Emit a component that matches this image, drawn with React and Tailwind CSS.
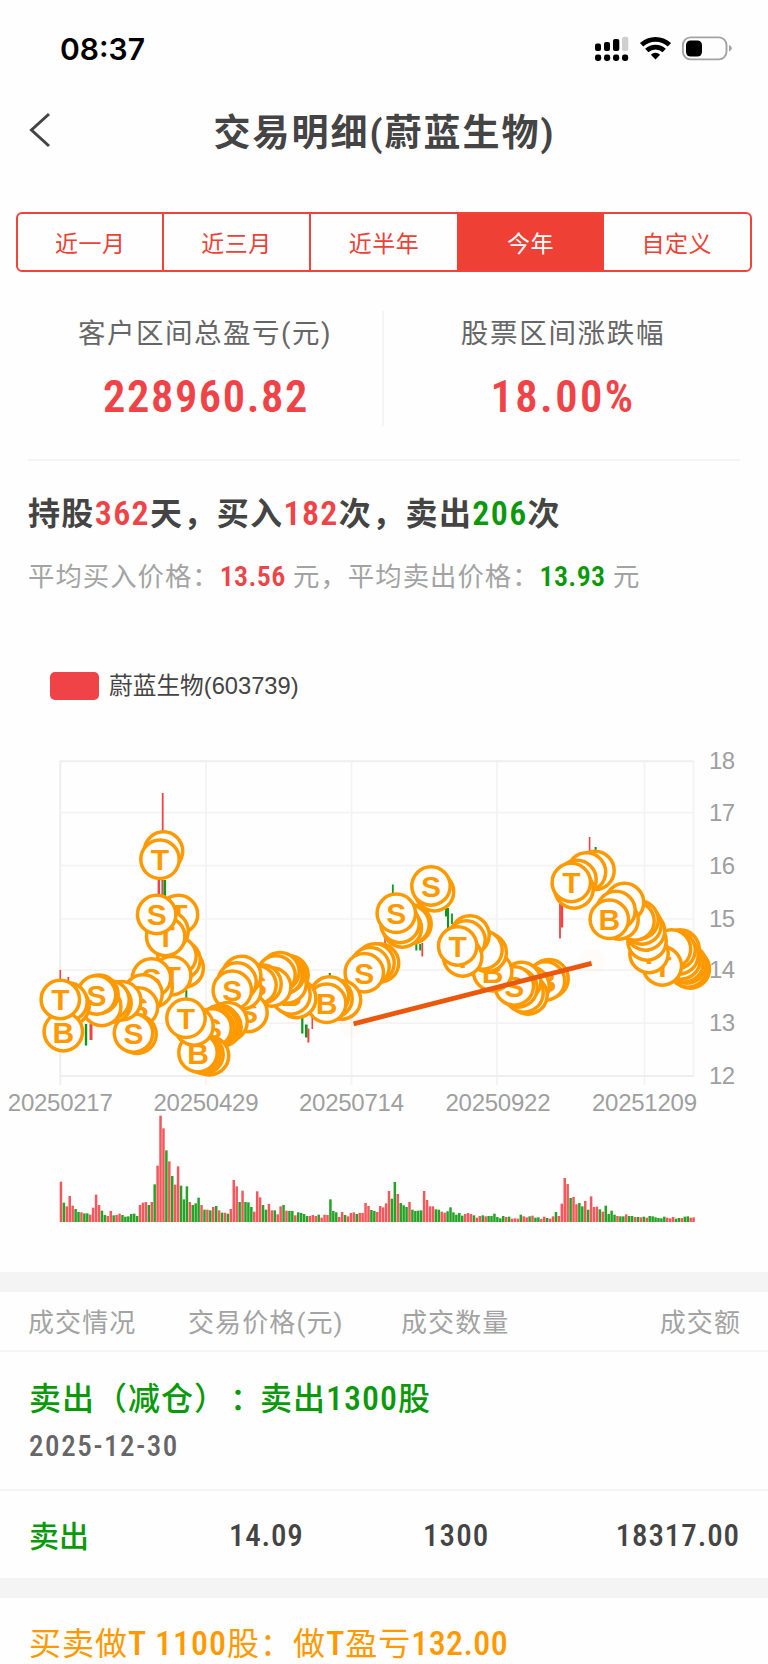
import React from 'react';

const FONT = "font-['Roboto','Noto_Sans_CJK_SC',sans-serif]";
const RED = '#f04347';
const ORANGE = '#ff9900';

const tabs = ['近一月', '近三月', '近半年', '今年', '自定义'];

// Trade markers: [x, y, letter]
const markers = [
  [60.3, 999.5, 'T'], [63.3, 1031.7, 'B'], [68, 1002, ''], [70, 1006, ''],
  [96.5, 995, 'S'], [99, 994.3, ''], [101.7, 1006.5, ''], [112, 1003, ''], [110, 1000, ''], [121.7, 1000.7, 'S'],
  [133.5, 1033, 'S'], [137, 1034.2, ''], [138.5, 1007, 'S'], [143, 994, ''], [151.5, 978, 'S'], [153, 988, ''],
  [171.7, 975.7, 'T'], [184.2, 968, ''], [181, 960, ''], [177, 956, ''],
  [165.7, 936.5, 'T'], [169, 931, ''], [156.7, 914.5, 'S'], [178.5, 914.5, 'T'], [160, 859.3, 'T'], [163.5, 851, ''],
  [186, 1018.3, 'T'], [194, 1026, ''], [198, 1052.7, 'B'], [201, 1053, ''], [204, 1054.5, ''], [209.5, 1055.7, ''],
  [212, 1028, 'S'], [215, 1028.5, ''], [218, 1026.5, ''], [220, 1024.5, ''], [222, 1027, ''], [228, 1021.7, ''],
  [232.3, 990.3, 'S'], [237, 982, ''], [241.7, 975.5, ''], [242, 990, ''], [248, 1012.5, 'S'],
  [257, 985, 'S'], [262, 984, ''], [271.7, 987, ''], [276, 975, ''], [280, 971.7, 'B'], [283, 975, ''], [285, 974, ''], [287, 977, ''], [289, 975, ''], [287, 984, ''],
  [296.7, 998.5, ''], [291, 995, 'B'],
  [326.7, 1003.3, 'B'], [329.5, 996, ''], [333, 998.5, ''], [341.5, 1000, ''],
  [364.3, 972.7, 'S'], [370, 966.7, ''], [375, 963, ''], [379.5, 963, ''],
  [396.3, 913.3, 'S'], [400, 923.5, ''], [402.3, 928, ''], [410, 924.5, ''], [412, 924, ''],
  [431, 886, 'S'], [434.5, 891.7, ''],
  [457.7, 946, 'T'], [462.7, 957, 'T'], [470, 935, ''], [466, 940, ''], [483, 950, ''], [487.2, 952.5, ''], [492.7, 971.7, 'B'],
  [514.3, 986, 'S'], [518, 988, ''], [521.7, 981.5, ''], [524, 993, ''], [528, 995, ''], [530, 986, ''], [545.5, 981, 'B'], [549, 978.7, ''],
  [571.3, 882.5, 'T'], [574, 889, ''], [577, 879.5, ''], [586.5, 872, ''], [595, 870.5, ''],
  [609.3, 919.3, 'B'], [616, 910.5, ''], [619, 920, ''], [624.5, 902.5, ''], [635, 921, ''], [639, 920, ''], [642, 925, ''], [645.5, 931, ''],
  [647, 941, 'T'], [649, 953.5, 'T'], [662.3, 966, 'T'], [671.5, 949, ''], [676, 950, ''], [680, 949, ''], [679, 955, ''], [681, 960, ''], [684, 963, ''], [688, 968, ''], [690.3, 969, ''], [687, 964, ''],
].sort((a, b) => b[0] - a[0]);

// Candles outside the markers: [x, top, bottom, width, colour]
const candles = [
  [60.3, 970, 985, 1.6, 'r'], [68.3, 977, 985, 1.8, 'r'], [86, 1024, 1045.5, 2.4, 'g'], [91, 1024, 1040, 3, 'r'],
  [162.7, 793, 840, 1.8, 'r'], [158.8, 880, 897, 2.4, 'r'], [162.4, 880, 897, 2, 'r'], [164.8, 880, 896, 2.6, 'g'], [186.3, 990, 1004, 2, 'g'],
  [302.3, 1018, 1033.5, 2.2, 'g'], [306.3, 1024.5, 1037.5, 2.6, 'g'], [308.4, 1028.5, 1042.5, 2, 'r'], [312.3, 1016, 1029, 1.6, 'r'], [329.8, 973, 980, 2, 'g'],
  [392.8, 884.5, 896, 1.8, 'g'], [416.3, 944, 950.5, 2, 'g'], [420.2, 944, 950.5, 2, 'g'], [422.3, 943, 956.5, 1.8, 'r'], [385, 938, 945, 1.6, 'r'],
  [446.3, 908, 916.5, 2.6, 'g'], [448, 908, 928, 2, 'g'], [452, 913.5, 924, 1.8, 'g'],
  [560, 904, 938.5, 1.8, 'r'], [562, 904, 927.5, 2.4, 'r'], [589.6, 837, 852, 1.6, 'r'], [595.6, 847, 851, 2, 'g'],
];

const volume = `r121 g58 r47 r78 r49 g39 g30 r29 g26 g26 r22 r43 r82 r51 g34 g21 r18 r33 g20 r21 r25 g21 g16 g17 g24 g25 g18
r51 r58 r60 g51 r60 g113 r169 r319 r281 g215 r182 g138 r112 r167 g109 g68 g107 r60 g51 g56 g73 r51 g37 r37 g35 r45 g48 r35 g28
r28 g25 r39 r126 r107 g60 r94 g60 g59 g45 r31 r92 r74 g51 g37 r54 r35 g35 r23 r47 g51 r34 g33 g33 r20 g29 g27 g24 g18
r18 r21 r18 g22 r13 r22 r21 g68 g33 g29 r15 r30 g21 r17 r27 r29 g24 r27 r27 r57 r48 g36 g33 r30 r48 r44 r56 r93
g70 g120 r84 g57 g50 g45 r60 g37 g33 g34 g35 r93 r66 r47 r47 g38 g37 r31 r28 g32 g44 g29 g22 g27 g19 r24 r27 r24 g20
r13 r18 g20 r17 g18 g18 g25 g15 g11 g18 r15 g16 r10 r11 r10 g22 r17 r14 g17 r19 g13 g14 r9 r16 g12 r10 r17 g30 r18
r55 r132 r114 g72 r75 r53 g57 g47 r63 g37 r77 r45 r46 g38 r31 g49 g24 g34 g22 r18 g17 g17 r23 g18 g18 r15 g15 r14 g16
r13 g18 g17 g14 g12 g11 g16 r13 r11 r15 g10 g12 r12 g16 g17 r13 r14`.split(/\s+/);

const prices = [[761, 18], [812.7, 17], [865.7, 16], [919, 15], [970.2, 14], [1023.2, 13], [1076, 12]];
const dates = [[60.3, '20250217'], [206, '20250429'], [351.5, '20250714'], [498, '20250922'], [644.5, '20251209']];

function StatusBar() {
  return (
    <div className="flex h-[94px] items-start justify-between pl-[60px] pr-[36px]">
      <span className="mt-[27px] font-['Inter',sans-serif] text-[30px] leading-[45px] font-semibold text-black">08:37</span>
      <div className="mt-[34px] flex">
        <svg width="138" height="30" viewBox="594 34 138 30">
          <rect x="595" y="43.5" width="6" height="7.5" rx="2" />
          <rect x="604" y="42" width="6" height="9" rx="2" />
          <rect x="613" y="39" width="6.3" height="12" rx="2" />
          <rect x="622" y="36.7" width="6.3" height="14.3" rx="2" fill="#cfcfcf" />
          {[595, 604, 613, 622].map((x) => <rect key={x} x={x} y="54.5" width="6.2" height="6.5" rx="2.4" />)}
          <g fill="none" stroke="#000" strokeWidth="4.8">
            <path d="M641.6 44.8 A20.5 20.5 0 0 1 669.4 44.8" />
            <path d="M646.8 50.6 A12.8 12.8 0 0 1 664.2 50.6" />
          </g>
          <path d="M655.5 59.4 L650.9 54.7 A6.6 6.6 0 0 1 660.1 54.7 Z" />
          <rect x="682.9" y="37.4" width="43.6" height="22" rx="7.6" fill="none" stroke="#a3a3a3" strokeWidth="1.9" />
          <rect x="686" y="40.5" width="16" height="16" rx="4.6" />
          <path d="M729 45 Q731.8 46 731.8 48.3 Q731.8 50.6 729 51.6 Z" fill="#a3a3a3" />
        </svg>
      </div>
    </div>
  );
}

function Chart() {
  return (
    <svg className="block" width="768" height="512" viewBox="0 730 768 512">
      <g stroke="#f3f3f3" strokeWidth="1.7">
        {prices.map(([y]) => <line key={y} x1="60" x2="693.5" y1={y} y2={y} />)}
        {dates.map(([x]) => <line key={x} x1={x === 498 ? 497 : x} x2={x === 498 ? 497 : x} y1="761" y2="1085" />)}
        <line x1="693.5" x2="693.5" y1="761" y2="1076" />
      </g>
      <path d="M60.3 1085 V761.3 H693.5 M60 1076 H693.5" fill="none" stroke="#eeeeee" strokeWidth="1.8" />
      <g fill="#9f9f9f" fontFamily="Liberation Sans, Arial, sans-serif" fontSize="24">
        {prices.map(([y, v]) => <text key={v} x="709" y={y + 7.8} textLength="26">{v}</text>)}
        {dates.map(([x, d]) => <text key={d} x={x} y="1111.4" textAnchor="middle" textLength="105">{d}</text>)}
      </g>
      {candles.map(([x, t, b, w, c], i) => (
        <rect key={i} x={x - w / 2} y={t} width={w} height={b - t} fill={c === 'r' ? RED : '#089a1a'} />
      ))}
      <g fill="#fff" stroke={ORANGE} strokeWidth="3.5">
        {markers.map(([x, y, letter], i) => (
          <g key={i}>
            <circle cx={x} cy={y} r="19.2" />
            {letter && (
              <text x={x} y={y + 10.8} fill={ORANGE} stroke="none" textAnchor="middle" fontFamily="Liberation Sans, Arial, sans-serif" fontWeight="700" fontSize="30">
                {letter}
              </text>
            )}
          </g>
        ))}
      </g>
      <circle cx="353" cy="1024" r="13" fill="#ec5a08" opacity="0.02" />
      <circle cx="592" cy="962" r="13" fill="#ec5a08" opacity="0.02" />
      <line x1="353.6" y1="1023.8" x2="591.6" y2="963.3" stroke="#ea580c" strokeWidth="4.8" />
      {volume.map((v, i) => {
        const h = Number(v.slice(1)) / 3;
        return <rect key={i} x={59.7 + i * 2.929} y={1222 - h} width="2.5" height={h} fill={v[0] === 'r' ? '#f5585c' : '#26a326'} />;
      })}
    </svg>
  );
}

export default function App() {
  return (
    <div className={`${FONT} flex h-[1664px] w-[768px] flex-col overflow-hidden bg-[#fefefe] text-[#444] [text-spacing-trim:space-all] *:shrink-0`}>
      <StatusBar />

      <header className="flex h-[76px] items-center">
        <svg className="mb-[4px] ml-[28px]" width="24" height="38" viewBox="28 111 24 38" fill="none" stroke="#444" strokeWidth="3">
          <path d="M49 114 L31.5 130 L49 146" />
        </svg>
        <h1 className="flex-1 pt-[3px] pr-[51px] text-center text-[37px] leading-[56px] font-bold tracking-[2px] whitespace-nowrap">交易明细(蔚蓝生物)</h1>
      </header>

      <nav className="mx-[16px] mt-[42px] grid h-[60px] grid-cols-5 overflow-hidden rounded-[6px] border-2 border-[#f0443a] text-center text-[23px] leading-[61px] tracking-[0.5px] text-[#ee4034]">
        {tabs.map((t, i) => (
          <div key={t} className={`${i < 2 ? 'border-r-2 border-[#f0443a]' : ''} ${i === 3 ? 'bg-[#ee4034] text-white' : ''}`}>{t}</div>
        ))}
      </nav>

      <section className="mx-[28px] flex h-[189px] border-b-2 border-[#f4f4f4] pt-[39px] text-center">
        <div className="h-[115px] w-[356px] border-r-2 border-[#f4f4f4]">
          <div className="mt-[3px] text-[27.5px] leading-[40px] tracking-[1.5px] text-[#666]">客户区间总盈亏(元)</div>
          <div className="mt-[17px] pl-[2px] font-stretch-[85%] text-[44.5px] leading-[52px] font-semibold tracking-[1.6px] text-[#f04347]">228960.82</div>
        </div>
        <div className="flex-1 pl-[2px]">
          <div className="mt-[3px] text-[27.5px] leading-[40px] tracking-[1.7px] text-[#666]">股票区间涨跌幅</div>
          <div className="mt-[17px] font-stretch-[85%] text-[44.5px] leading-[52px] font-semibold tracking-[2.4px] text-[#f04347]">18.00%</div>
        </div>
      </section>

      <section className="h-[207px] pt-[29px] pl-[28px] whitespace-nowrap">
        <p className="text-[32px] leading-[48px] font-bold tracking-[1.35px]">
          持股<b className="font-stretch-[85%] text-[34px] leading-none font-semibold text-[#f04347]">362</b>天，买入<b className="font-stretch-[85%] text-[34px] leading-none font-semibold text-[#f04347]">182</b>次，卖出<b className="font-stretch-[85%] text-[34px] leading-none font-semibold text-[#0a990a]">206</b>次
        </p>
        <p className="mt-[19px] text-[26.4px] leading-[40px] tracking-[1px] text-[#a3a3a3]">
          平均买入价格：<b className="font-stretch-[85%] text-[28px] leading-none font-semibold tracking-[0.3px] text-[#f04347]">13.56</b> 元，平均卖出价格：<b className="font-stretch-[85%] text-[28px] leading-none font-semibold tracking-[0.3px] text-[#0a990a]">13.93</b> 元
        </p>
      </section>

      <div className="flex h-[62px] items-center gap-[10px] pl-[50px] pb-[26px]">
        <span className="h-[28px] w-[49px] rounded-[5px] bg-[#f04347]" />
        <span className="font-['Liberation_Sans','Noto_Sans_CJK_SC',sans-serif] text-[23.7px] leading-[36px] text-[#444]">蔚蓝生物(603739)</span>
      </div>

      <Chart />

      <div className="h-[30px]" />
      <div className="h-[20px] bg-[#f4f4f4]" />

      <div className="flex h-[60px] items-center border-b-2 border-[#f4f4f4] px-[28px] pt-[5px] text-[26px] tracking-[1.1px] whitespace-nowrap text-[#a3a3a3]">
        <span className="w-[160px]">成交情况</span>
        <span className="w-[213px]">交易价格(元)</span>
        <span className="w-[159px]">成交数量</span>
        <span className="-mr-[1px] flex-1 text-right">成交额</span>
      </div>

      <div className="h-[139px] border-b-2 border-[#f4f4f4] pt-[23px] pl-[29px]">
        <p className="text-[32px] leading-[48px] font-medium tracking-[1px] text-[#0a990a]">
          卖出（减仓）<span className="-mr-[3px] pl-[3px]">：</span>卖出<span className="font-stretch-[85%] text-[34px] leading-none">1300</span>股
        </p>
        <p className="mt-[3px] font-stretch-[85%] text-[29px] leading-[40px] font-medium tracking-[1.6px] text-[#666]">2025-12-30</p>
      </div>

      <div className="flex h-[87px] items-center px-[29px] pt-[3px] text-[30px] font-medium">
        <span className="w-[200px] text-[#0a990a]">卖出</span>
        <span className="w-[194px] font-stretch-[85%] text-[31px] tracking-[0.8px]">14.09</span>
        <span className="w-[130px] font-stretch-[85%] text-[31px] tracking-[1.1px]">1300</span>
        <span className="-mr-[1px] flex-1 text-right font-stretch-[85%] text-[31px] tracking-[0.9px]">18317.00</span>
      </div>

      <div className="h-[20px] bg-[#f4f4f4]" />
      <p className="pt-[22px] pl-[29px] text-[32px] leading-[48px] tracking-[1px] whitespace-nowrap text-[#ff9900]">
        买卖做<span className="font-stretch-[85%] text-[34px] leading-none font-medium">T 1100</span>股：做<span className="font-stretch-[85%] text-[34px] leading-none font-medium">T</span>盈亏<span className="font-stretch-[85%] text-[34px] leading-none font-medium tracking-[0.4px]">132.00</span>
      </p>
    </div>
  );
}
